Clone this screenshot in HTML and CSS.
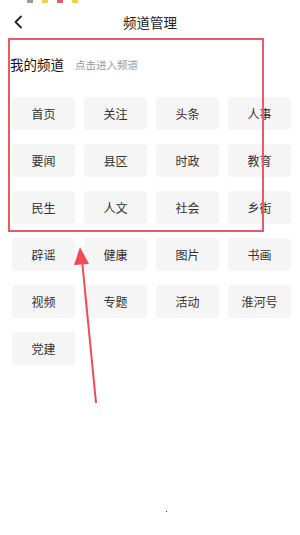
FILE: index.html
```html
<!DOCTYPE html>
<html lang="zh">
<head>
<meta charset="utf-8">
<link rel="stylesheet" href="styles.css">
</head>
<body>
<div class="page">
  <div class="statusbar">
    <span class="sb sb-gray"></span><span class="sb sb-yellow"></span><span class="sb sb-red"></span><span class="sb sb-yellow"></span>
  </div>
  <header class="nav">
    <svg class="back" width="10" height="14" viewBox="0 0 10 14"><path d="M8 1.5 L2.5 7 L8 12.5" fill="none" stroke="#222" stroke-width="1.8" stroke-linecap="round" stroke-linejoin="round"/></svg>
    <h1 class="title">频道管理</h1>
  </header>
  <div class="section-head">
    <span class="section-title">我的频道</span>
    <span class="section-hint">点击进入频道</span>
  </div>
  <div class="grid">
    <div class="tile">首页</div><div class="tile">关注</div><div class="tile">头条</div><div class="tile">人事</div>
    <div class="tile">要闻</div><div class="tile">县区</div><div class="tile">时政</div><div class="tile">教育</div>
    <div class="tile">民生</div><div class="tile">人文</div><div class="tile">社会</div><div class="tile">乡街</div>
    <div class="tile">辟谣</div><div class="tile">健康</div><div class="tile">图片</div><div class="tile">书画</div>
    <div class="tile">视频</div><div class="tile">专题</div><div class="tile">活动</div><div class="tile">淮河号</div>
    <div class="tile">党建</div>
  </div>
  <div class="dot"></div>
  <div class="highlight"></div>
  <svg class="arrow" width="300" height="535" viewBox="0 0 300 535">
    <line x1="96" y1="403" x2="82" y2="260" stroke="#ef4a55" stroke-width="2"/>
    <polygon points="80,247 74,265 89,264" fill="#ef4a55"/>
  </svg>
</div>
</body>
</html>
```

FILE: styles.css
```css
* { box-sizing: border-box; margin: 0; padding: 0; }
html, body { background: #fff; }
body {
  font-family: "Noto Sans CJK SC", "Noto Sans", sans-serif;
  color: #222;
}
.page {
  position: relative;
  width: 300px;
  height: 535px;
  overflow: hidden;
}
.statusbar {
  height: 0;
  display: flex;
  gap: 9px;
  padding-left: 27px;
}
.sb {
  display: block;
  width: 6px;
  height: 3px;
  flex: none;
}
.sb-gray { background: #9a9a9a; }
.sb-yellow { background: #f3cf55; }
.sb-red { background: #e0606a; }
.nav {
  height: 44px;
  display: flex;
  align-items: center;
  justify-content: center;
  position: relative;
}
.back {
  position: absolute;
  left: 13px;
  top: 15px;
}
.title {
  font-size: 13.5px;
  font-weight: 400;
  color: #222;
}
.section-head {
  height: 40px;
  display: flex;
  align-items: center;
  padding-left: 10px;
  gap: 11px;
}
.section-title {
  font-size: 13.5px;
  color: #111;
}
.section-hint {
  font-size: 10.5px;
  color: #999;
}
.grid {
  margin-top: 13px;
  padding: 0 9px 0 12px;
  display: grid;
  grid-template-columns: repeat(4, 63px);
  column-gap: 9px;
  row-gap: 14px;
}
.tile {
  height: 33px;
  background: #f5f5f5;
  border-radius: 4px;
  display: flex;
  align-items: center;
  justify-content: center;
  font-size: 12px;
  color: #333;
}
.dot {
  position: absolute;
  left: 166px;
  top: 511px;
  width: 1px;
  height: 1px;
  background: #333;
}
.highlight {
  position: absolute;
  left: 8px;
  top: 38px;
  width: 256px;
  height: 194px;
  border: 2px solid #ea5a62;
}
.arrow {
  position: absolute;
  left: 0;
  top: 0;
}
```
